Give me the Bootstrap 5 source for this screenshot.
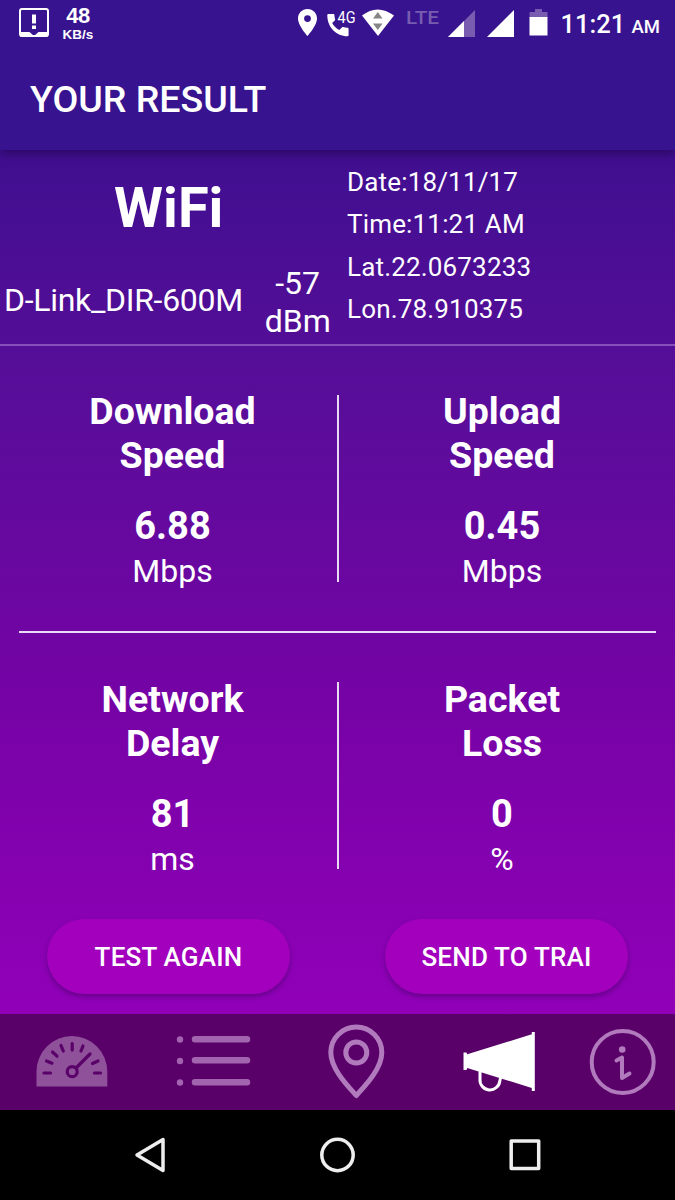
<!DOCTYPE html>
<html lang="en">
<head>
<meta charset="utf-8">
<meta name="viewport" content="width=device-width, initial-scale=1">
<title>Your Result</title>
<link rel="stylesheet" href="https://cdn.jsdelivr.net/npm/bootstrap@5.3.0/dist/css/bootstrap.min.css">
<style>
body{font-family:Roboto,"Liberation Sans",sans-serif;width:675px;height:1200px;overflow:hidden;background:#000;color:#fff}
svg{display:block;flex:none}
.topbar{height:150px;background:#371390;box-shadow:0 3px 10px rgba(20,0,50,.55);z-index:2}
.statusbar{height:48px;padding-left:18px;padding-right:15px}
.rate{width:36px;margin-left:10px;font-family:"Liberation Sans",sans-serif;font-weight:700;line-height:1}
.rate-num{font-size:22px;line-height:18px;letter-spacing:-.5px}
.rate-unit{font-size:13.5px;line-height:13px;margin-top:3px}
.clock{width:100px;font-size:25.5px;font-weight:500;line-height:48px;padding-top:2px}
.clock span{font-size:18.5px}
.app-title{font-size:37.5px;font-weight:500;line-height:44px;padding:29px 0 0 30px}
.screen{height:864px;background:linear-gradient(#400f90,#5a0d9a 30%,#7503a5 63%,#9100b8)}
.info{height:196px;border-bottom:2px solid #8650bc}
.wifi{font-size:56px;font-weight:700;line-height:66px;padding-top:25px}
.net{font-size:32px;line-height:37.5px}
.ssid{width:243px;padding-left:4px;letter-spacing:-.3px;margin-top:-3px}
.dbm{width:80px;margin-left:15px}
.meta{font-size:26px;line-height:42.3px;letter-spacing:.17px;padding:11px 0 0 9.5px}
.spacer{height:49px}
.metrics{height:187px}
.metric-l{width:345px}.metric-r{width:328px}
.heading{font-size:37.5px;font-weight:700;line-height:44px;margin-top:-5px}
.metrics-first .heading{margin-top:-6px}
.value{font-size:38px;font-weight:700;line-height:44px;margin-top:27px}
.unit{font-size:32px;line-height:38px;margin-top:4px}
.vline{width:2px;background:#e9daf4;margin-left:-8px;margin-right:-1px}
.hline{height:2px;background:#eadcf5;margin:49px 19px}
.actions{padding:50px 47px 0}
.pill{width:243px;height:75px;border-radius:38px;background:#a200bd;color:#fff;font-size:26px;letter-spacing:.2px;font-weight:500;box-shadow:0 3px 5px rgba(50,0,80,.4)}
.pill span{display:block;padding-top:2px}
.tabs{height:96px;background:#590069}
.sysnav{height:90px}
</style>
</head>
<body>
<header class="topbar position-relative">
  <div class="statusbar d-flex align-items-center">
    <svg width="32" height="32" viewBox="0 0 32 32"><rect x="2" y="1" width="28" height="27" rx="2" fill="none" stroke="#fff" stroke-width="2"/><path d="M2 24h9.500l4.500 4 4.500-4H30v4.500H2z" fill="#fff"/><path d="M14 6.500h4v9h-4zM14 17.500h4v3.500h-4z" fill="#fff"/></svg>
    <div class="rate text-center"><div class="rate-num">48</div><div class="rate-unit">KB/s</div></div>
    <svg class="ms-auto" width="262" height="48" viewBox="290 0 262 48" font-family="Roboto, sans-serif">
      <path d="M307.500 9c-5.500 0-9.500 4.300-9.500 9.500 0 7 9.500 17.500 9.500 17.500s9.500-10.500 9.500-17.500c0-5.200-4-9.500-9.500-9.500zm0 13a3.400 3.400 0 1 1 0-6.800 3.400 3.400 0 0 1 0 6.800z" fill="#fff"/>
      <path d="M328.500 14h4.800c.7 0 1 .4 1.100 1 .1 1.500.3 3 .7 4.200.1.500 0 .9-.3 1.200l-2.600 2.600c1.700 3 4 5.400 7.100 7l2.600-2.600c.4-.3.8-.4 1.200-.3 1.400.5 2.800.7 4.300.7.700 0 1.200.4 1.200 1.100v6.100c0 .8-.4 1.200-1.200 1.200-11 0-20.100-9-20.100-21 0-.7.500-1.200 1.200-1.200z" fill="#fff"/>
      <text x="337.500" y="22.500" font-size="16.500" textLength="18" lengthAdjust="spacingAndGlyphs" fill="#fff">4G</text>
      <path d="M362 15.500q15.500-12 32 0L378 36z" fill="#fff"/><path d="M373 18.500h9.500l-4.700-6.500zM373 23.500h9.500l-4.700 6.500z" fill="#858585"/>
      <text x="406" y="23.500" font-size="19" font-weight="500" textLength="33" lengthAdjust="spacingAndGlyphs" fill="#775caf">LTE</text>
      <path d="M448 37l27-27v27z" fill="#775caf"/><path d="M448 37l16-16v16z" fill="#fff"/>
      <path d="M487 37l27-27v27z" fill="#fff"/>
      <path d="M535 9h7v3h5.500v6h-18v-6h5.500z" fill="#775caf"/><path d="M529.500 17h18v18.500h-18z" fill="#fff"/>
    </svg>
    <div class="clock text-nowrap text-end ms-2">11:21 <span>AM</span></div>
  </div>
  <div class="app-title">YOUR RESULT</div>
</header>
<main class="screen">
  <section class="info d-flex">
    <div class="w-50">
      <div class="wifi text-center">WiFi</div>
      <div class="net d-flex align-items-center mt-4 text-nowrap"><div class="ssid">D-Link_DIR-600M</div><div class="dbm text-center">-57<br>dBm</div></div>
    </div>
    <div class="meta"><div>Date:18/11/17</div><div>Time:11:21 AM</div><div>Lat.22.0673233</div><div>Lon.78.910375</div></div>
  </section>
  <div class="spacer"></div>
  <section class="metrics metrics-first d-flex text-center">
    <div class="metric-l"><div class="heading">Download<br>Speed</div><div class="value">6.88</div><div class="unit">Mbps</div></div>
    <div class="vline"></div>
    <div class="metric-r"><div class="heading">Upload<br>Speed</div><div class="value">0.45</div><div class="unit">Mbps</div></div>
  </section>
  <div class="hline"></div>
  <section class="metrics d-flex text-center">
    <div class="metric-l"><div class="heading">Network<br>Delay</div><div class="value">81</div><div class="unit">ms</div></div>
    <div class="vline"></div>
    <div class="metric-r"><div class="heading">Packet<br>Loss</div><div class="value">0</div><div class="unit">%</div></div>
  </section>
  <div class="actions d-flex justify-content-between">
    <button class="pill btn border-0 p-0" type="button"><span>TEST AGAIN</span></button>
    <button class="pill btn border-0 p-0" type="button"><span>SEND TO TRAI</span></button>
  </div>
</main>
<nav class="tabs" aria-label="Sections">
  <svg width="675" height="96" viewBox="0 1014 675 96" fill="none" stroke-linecap="round">
    <path d="M36.500 1086.500v-15a35.300 35.300 0 0 1 70.800 0v15z" fill="#8f519a"/>
    <g stroke="#590069" stroke-width="3.200"><circle cx="72.200" cy="1071.700" r="5" /><path d="M76 1068l14-14M44 1073h6.500M94.500 1073h6M46.500 1061l5.500 2.200M52.500 1052l4.500 4.200M61 1045.500l2.300 5.500M72.200 1043.500v6.500M83 1046l-2 5M98 1061l-5.500 2.500"/></g>
    <g fill="#a363b0"><circle cx="180" cy="1039.500" r="3.200"/><circle cx="180" cy="1061" r="3.200"/><circle cx="180" cy="1082.500" r="3.200"/></g>
    <path d="M195 1039.300h52M195 1060.300h52M195 1082.300h52" stroke="#a264ae" stroke-width="6.500"/>
    <g stroke="#b17abd" stroke-width="5"><path d="M356.300 1095.500c-8-9-25.500-26.500-25.500-43a25.500 25.500 0 0 1 51 0c0 16.500-17.500 34-25.500 43z" stroke-linejoin="round"/><circle cx="356.300" cy="1052.500" r="10.500"/></g>
    <path d="M463.500 1052.500h3l.8 1.800 64.500-20v-2.300h3v59h-3v-3l-64.500-20-.8 2h-3z" fill="#fff"/><path d="M480 1071v8a9.700 9.700 0 0 0 19.800 2l.7-3" stroke="#fff" stroke-width="3"/>
    <g stroke="#b17abd"><circle cx="622.700" cy="1062" r="31" stroke-width="4"/><path d="M616.500 1060.500l5.500-3v20.500l7.500-4.500" stroke-width="4" stroke-linejoin="round"/></g><circle cx="622.200" cy="1049.500" r="3.300" fill="#b17abd"/>
  </svg>
</nav>
<footer class="sysnav">
  <svg width="675" height="90" viewBox="0 1110 675 90" fill="none" stroke="#eee" stroke-width="3.500" stroke-linejoin="round"><path d="M137 1155l26-15.500v31z"/><circle cx="337.500" cy="1155" r="15.700"/><rect x="511.200" y="1141" width="27.500" height="27.500"/></svg>
</footer>
<script src="https://cdn.jsdelivr.net/npm/bootstrap@5.3.0/dist/js/bootstrap.bundle.min.js"></script>
</body>
</html>
